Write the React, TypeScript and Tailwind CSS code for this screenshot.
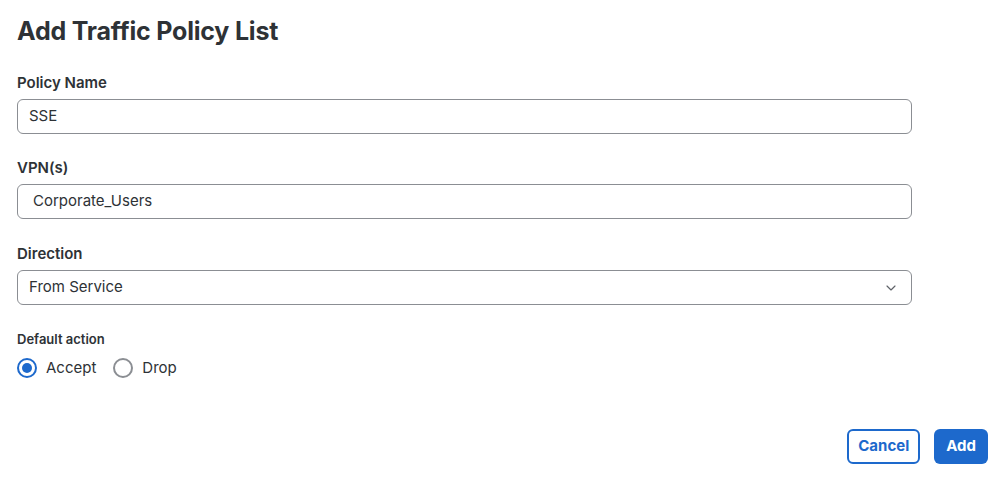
import { ChevronDown } from "lucide-react";

function Label({ children, small }: { children: string; small?: boolean }) {
  return (
    <div
      className={
        small
          ? "text-[13px] font-semibold text-[#2e3236] leading-4"
          : "text-[15px] font-semibold text-[#2e3236] leading-5"
      }
    >
      {children}
    </div>
  );
}

function TextField({ value, indent }: { value: string; indent?: boolean }) {
  return (
    <div
      className={`mt-[6px] h-[35px] w-[895px] rounded-[6px] border border-[#8b8e93] flex items-center text-[15px] text-[#2e3236] ${
        indent ? "pl-[15px]" : "pl-[11px]"
      }`}
    >
      {value}
    </div>
  );
}

function Radio({ label, checked }: { label: string; checked?: boolean }) {
  return (
    <label className="flex items-center gap-[9px] cursor-pointer">
      <span
        className={`w-[20px] h-[20px] rounded-full border-2 flex items-center justify-center ${
          checked ? "border-[#1d69cc]" : "border-[#8b8e93]"
        }`}
      >
        {checked && <span className="w-[10px] h-[10px] rounded-full bg-[#1d69cc]" />}
      </span>
      <span className="text-[15px] text-[#2e3236]">{label}</span>
    </label>
  );
}

export default function App() {
  return (
    <div
      className="w-[999px] h-[484px] bg-white relative"
      style={{ fontFamily: "Inter, 'Liberation Sans', sans-serif" }}
    >
      <div className="pl-[17px] pt-[15px]">
        <h1 className="text-[25px] font-bold text-[#2e3236] leading-8 tracking-[-0.2px]">
          Add Traffic Policy List
        </h1>

        <div className="mt-[26px]">
          <Label>Policy Name</Label>
          <TextField value="SSE" />
        </div>

        <div className="mt-[24px]">
          <Label>VPN(s)</Label>
          <TextField value="Corporate_Users" indent />
        </div>

        <div className="mt-[25px]">
          <Label>Direction</Label>
          <div className="mt-[6px] h-[35px] w-[895px] rounded-[6px] border border-[#8b8e93] flex items-center justify-between pl-[11px] pr-[12px] text-[15px] text-[#2e3236]">
            <span>From Service</span>
            <ChevronDown className="w-[16px] h-[16px] text-[#5f6368]" strokeWidth={1.75} />
          </div>
        </div>

        <div className="mt-[26px]">
          <Label small>Default action</Label>
          <div className="mt-[10px] flex items-center gap-[17px]">
            <Radio label="Accept" checked />
            <Radio label="Drop" />
          </div>
        </div>
      </div>

      <div className="absolute right-[11px] top-[429px] flex gap-[14px]">
        <button className="h-[35px] px-[9px] rounded-[6px] border-2 border-[#1d69cc] text-[#1d69cc] text-[15px] font-bold bg-white">
          Cancel
        </button>
        <button className="h-[35px] px-[12px] rounded-[6px] bg-[#1d69cc] text-white text-[15px] font-bold">
          Add
        </button>
      </div>
    </div>
  );
}
